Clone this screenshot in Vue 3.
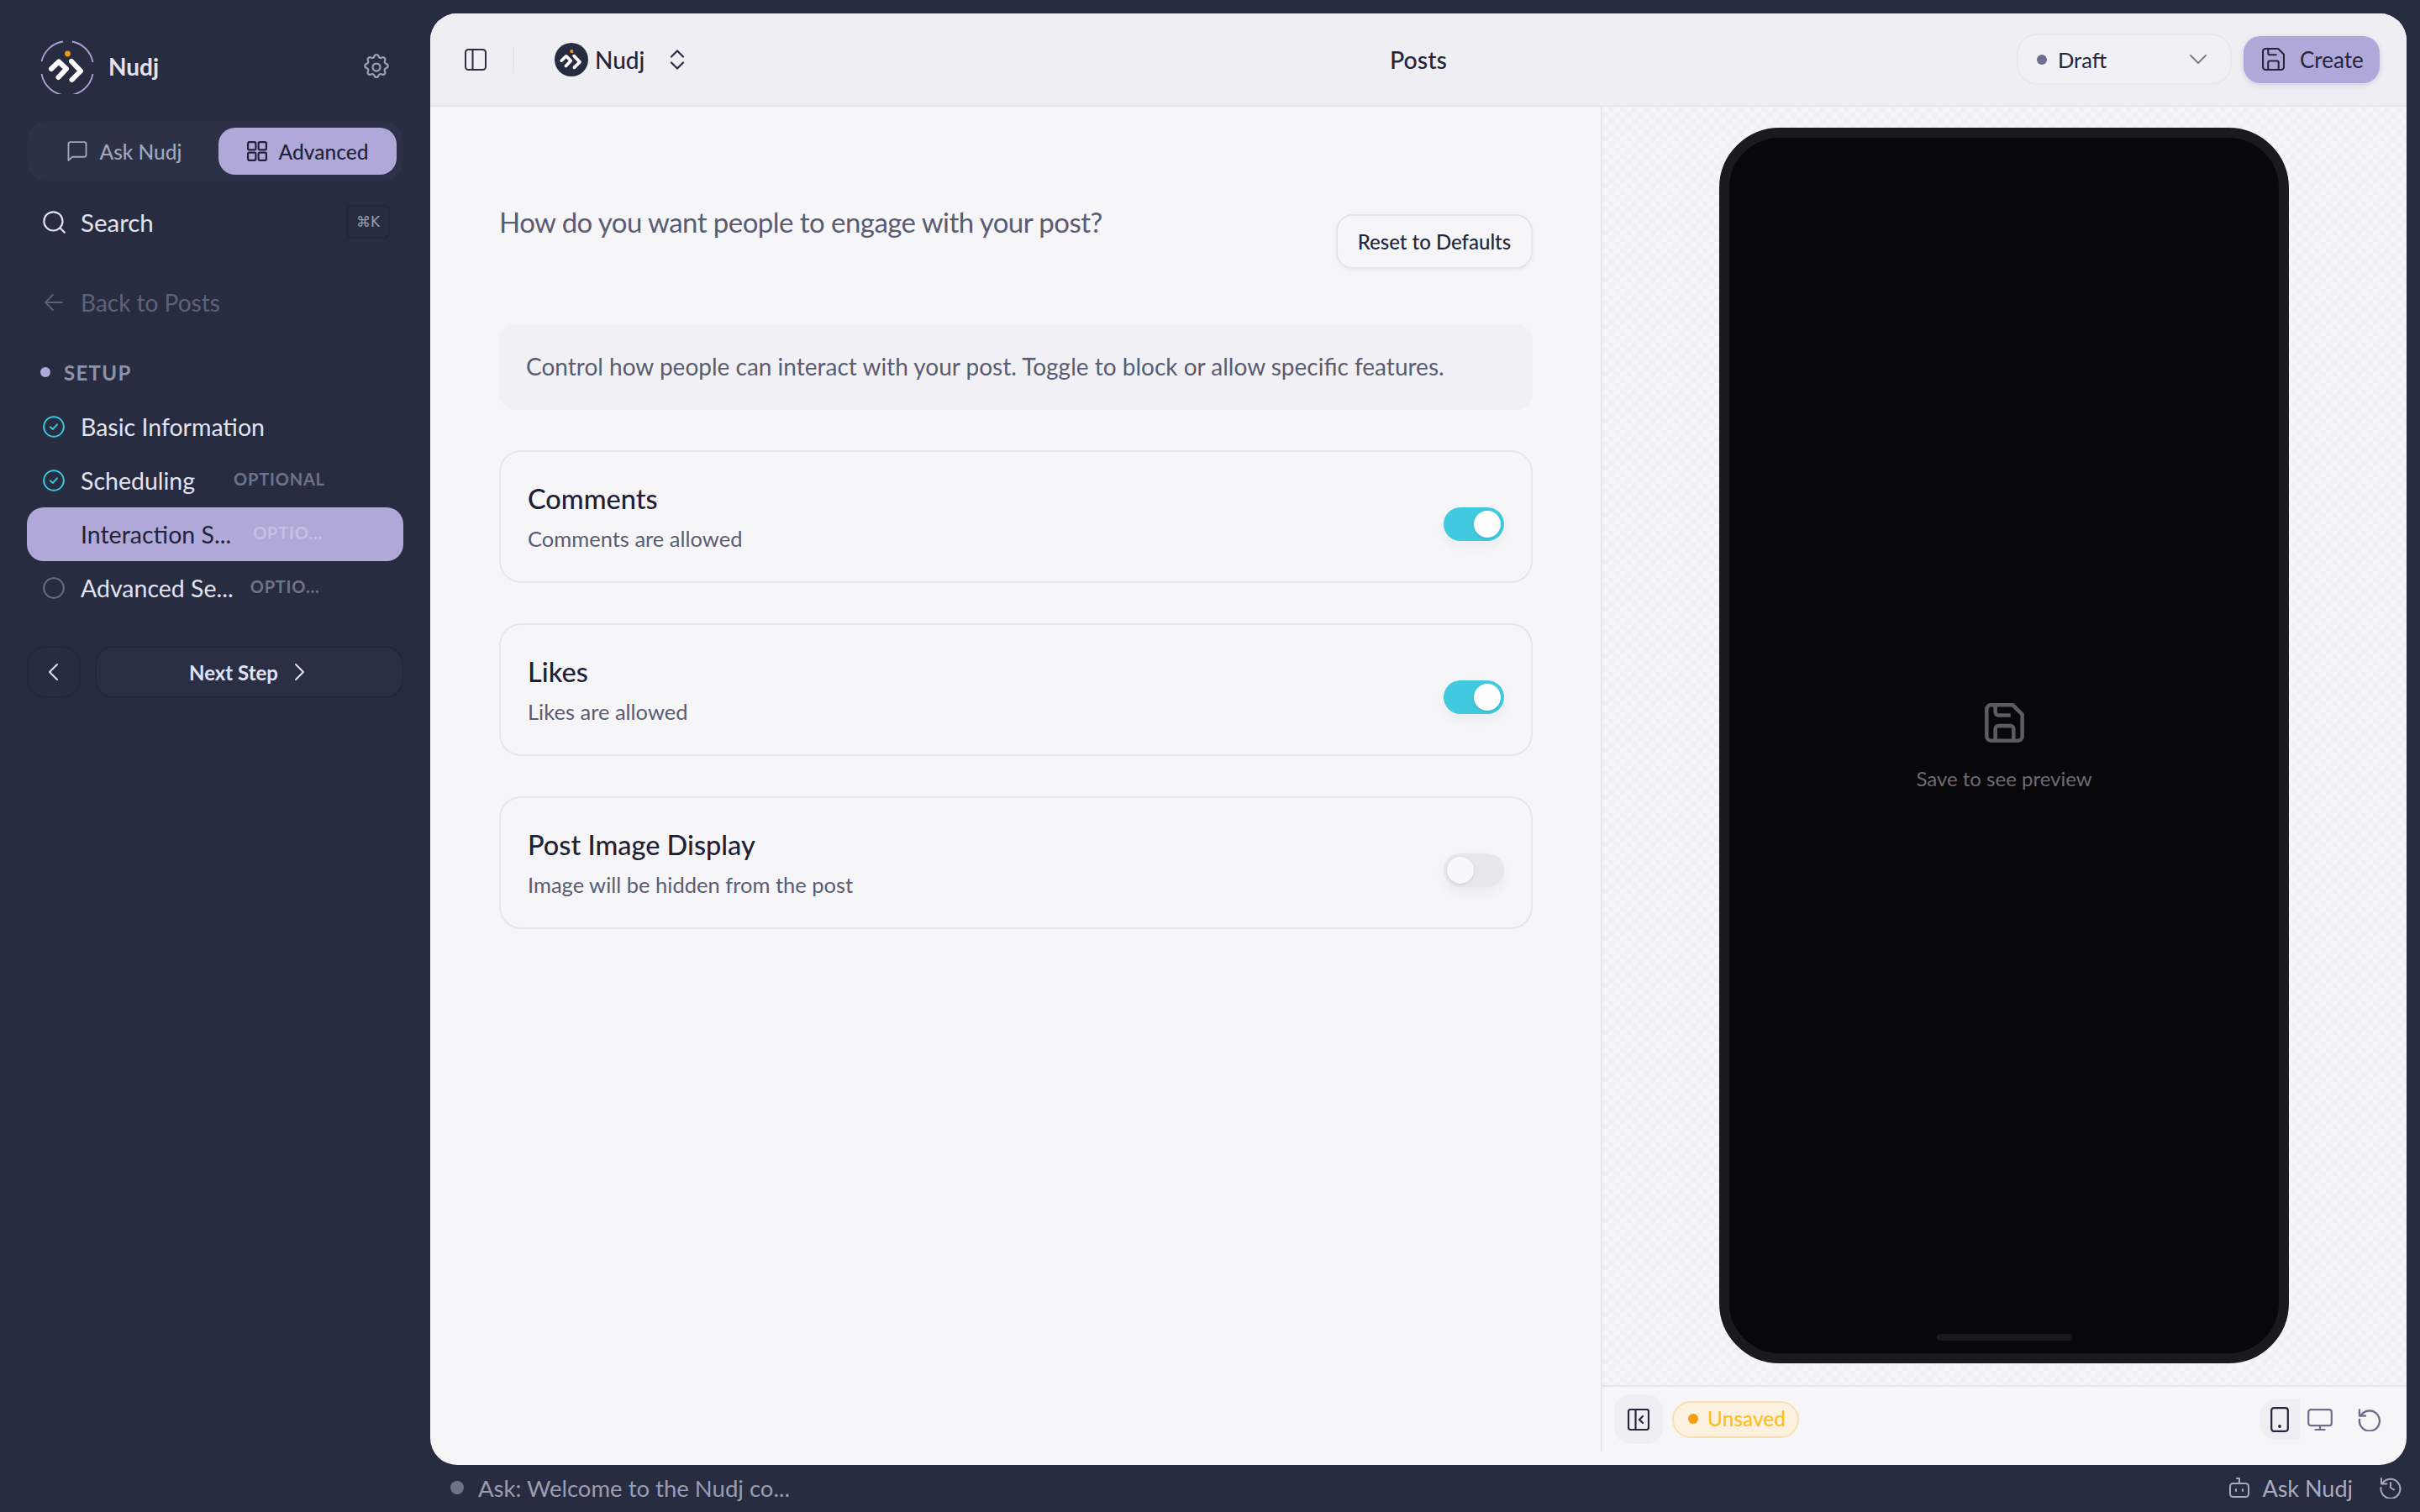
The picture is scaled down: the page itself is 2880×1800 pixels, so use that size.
<template>
  <div class="app">
    <aside class="sidebar">
      <div class="brand">
        <svg class="brand-logo" viewBox="0 0 64 64" fill="none">
          <path d="M1.5 25A31 31 0 0 1 27 1.5M38 1.5A31 31 0 0 1 62.5 26M62.5 40A31 31 0 0 1 1.5 40" stroke="#a9a3d4" stroke-width="1.8" />
          <circle cx="32.5" cy="16" r="3.4" fill="#f09a12" />
          <path d="M13 34l9-8.5 9 8.5-9.5 10M37 25l11 11.5L37.5 47" stroke="#fff" stroke-width="6" stroke-linecap="round" stroke-linejoin="round" />
        </svg>
        <span class="brand-name">Nudj</span>
        <svg class="gear" viewBox="0 0 24 24" fill="none" stroke="currentColor" stroke-width="1.5" stroke-linecap="round" stroke-linejoin="round">
          <path d="M10.3 3.3c.4-1.7 3-1.7 3.4 0a1.7 1.7 0 0 0 2.6 1.1c1.5-.9 3.3.8 2.4 2.4a1.7 1.7 0 0 0 1 2.5c1.8.4 1.8 3 0 3.4a1.7 1.7 0 0 0-1 2.6c.9 1.5-.9 3.3-2.4 2.4a1.7 1.7 0 0 0-2.6 1c-.4 1.8-3 1.8-3.4 0a1.7 1.7 0 0 0-2.6-1c-1.5.9-3.3-.9-2.4-2.4a1.7 1.7 0 0 0-1-2.6c-1.8-.4-1.8-3 0-3.4a1.7 1.7 0 0 0 1-2.5c-.9-1.6.9-3.3 2.4-2.4a1.7 1.7 0 0 0 2.6-1.1z" />
          <circle cx="12" cy="12" r="3" />
        </svg>
      </div>

      <div class="tabs">
        <div class="tab">
          <svg viewBox="2 2 20 20.5" fill="none" stroke="currentColor" stroke-width="1.6" stroke-linejoin="round"><path d="M3 5a2 2 0 0 1 2-2h14a2 2 0 0 1 2 2v11a2 2 0 0 1-2 2H7l-4 3.5z" /></svg>
          Ask Nudj
        </div>
        <div class="tab tab-active">
          <svg viewBox="1 1 22 22" fill="none" stroke="currentColor" stroke-width="2"><rect x="2" y="2" width="8.5" height="8.5" rx="1.5" /><rect x="13.5" y="2" width="8.5" height="8.5" rx="1.5" /><rect x="2" y="13.5" width="8.5" height="8.5" rx="1.5" /><rect x="13.5" y="13.5" width="8.5" height="8.5" rx="1.5" /></svg>
          Advanced
        </div>
      </div>

      <div class="search">
        <svg viewBox="0 0 24 24" fill="none" stroke="currentColor" stroke-width="1.8" stroke-linecap="round"><circle cx="11.5" cy="11.5" r="9.5" /><path d="M18.5 18.5L23 23" /></svg>
        <span>Search</span>
        <kbd class="kbd">⌘K</kbd>
      </div>

      <div class="back">
        <svg viewBox="0 0 24 24" fill="none" stroke="currentColor" stroke-width="1.8" stroke-linecap="round" stroke-linejoin="round"><path d="M22 12H2M11 3l-9 9 9 9" /></svg>
        Back to Posts
      </div>

      <div class="section"><i class="section-dot"></i>SETUP</div>

      <ul class="steps">
        <li v-for="step in steps" :key="step.label" class="step" :class="{ 'step-active': step.active }">
          <svg v-if="step.status === 'done'" class="step-icon" viewBox="0 0 26 26" fill="none" stroke="#3cc5d6" stroke-width="2" stroke-linecap="round" stroke-linejoin="round">
            <circle cx="13" cy="13" r="11.8" /><path d="M9 13.4l2.8 2.6L17 10.4" />
          </svg>
          <svg v-else-if="step.status === 'todo'" class="step-icon" viewBox="0 0 26 26" fill="none" stroke="#6b6f82" stroke-width="2"><circle cx="13" cy="13" r="11.8" /></svg>
          <span v-else class="step-icon"></span>
          <span class="step-label">{{ step.label }}</span>
          <span v-if="step.tag" class="step-tag" :style="{ marginLeft: step.tagGap + 'px' }">{{ step.tag }}</span>
        </li>
      </ul>

      <div class="step-nav">
        <button class="nav-prev">
          <svg viewBox="0 0 24 24" fill="none" stroke="currentColor" stroke-width="2" stroke-linecap="round" stroke-linejoin="round"><path d="M16 3l-9 9 9 9" /></svg>
        </button>
        <button class="nav-next">
          Next Step
          <svg viewBox="0 0 24 24" fill="none" stroke="currentColor" stroke-width="2" stroke-linecap="round" stroke-linejoin="round"><path d="M8 3l9 9-9 9" /></svg>
        </button>
      </div>
    </aside>

    <div class="main">
      <div class="panel">
        <header class="topbar">
          <div class="topbar-left">
            <svg class="topbar-toggle" viewBox="0 0 26 26" fill="none" stroke="#2a2d42" stroke-width="2"><rect x="1" y="1" width="24" height="24" rx="3.5" /><path d="M9.5 1v24" /></svg>
            <i class="topbar-divider"></i>
            <svg class="topbar-logo" viewBox="0 0 64 64" fill="none">
              <circle cx="32" cy="32" r="32" fill="#282c40" />
              <circle cx="32.5" cy="16" r="3.4" fill="#f09a12" />
              <path d="M13 34l9-8.5 9 8.5-9.5 10M37 25l11 11.5L37.5 47" stroke="#fff" stroke-width="6" stroke-linecap="round" stroke-linejoin="round" />
            </svg>
            <span class="topbar-name">Nudj</span>
            <svg class="topbar-updown" viewBox="0 0 18 24" fill="none" stroke="#2a2d42" stroke-width="2.2" stroke-linecap="round" stroke-linejoin="round"><path d="M2 8.5L9 1.5l7 7M2 15.5l7 7 7-7" /></svg>
          </div>
          <div class="topbar-title">Posts</div>
          <div class="topbar-right">
            <div class="status-select">
              <i class="status-dot"></i>
              <span>Draft</span>
              <svg viewBox="0 0 20 12" fill="none" stroke="#77777f" stroke-width="1.8" stroke-linecap="round" stroke-linejoin="round"><path d="M1 1l9 9 9-9" /></svg>
            </div>
            <button class="create-btn">
              <svg viewBox="0 0 26 26" fill="none" stroke="currentColor" stroke-width="2" stroke-linejoin="round"><path d="M4 1h14.5L25 7.5V22a3 3 0 0 1-3 3H4a3 3 0 0 1-3-3V4a3 3 0 0 1 3-3z" /><path d="M7 25v-8a2 2 0 0 1 2-2h8a2 2 0 0 1 2 2v8M7 1v5a2 2 0 0 0 2 2h8" /></svg>
              Create
            </button>
          </div>
        </header>

        <div class="body">
          <section class="form">
            <div class="question-row">
              <h2 class="question">How do you want people to engage with your post?</h2>
              <button class="reset-btn">Reset to Defaults</button>
            </div>
            <p class="info">Control how people can interact with your post. Toggle to block or allow specific features.</p>
            <div v-for="item in settings" :key="item.title" class="card">
              <div>
                <div class="card-title">{{ item.title }}</div>
                <div class="card-sub">{{ item.sub }}</div>
              </div>
              <div class="switch" :class="{ 'switch-on': item.on }"><i class="knob"></i></div>
            </div>
          </section>

          <section class="preview">
            <div class="canvas">
              <div class="phone">
                <svg class="phone-icon" viewBox="0 0 26 26" fill="none" stroke="#5c5c62" stroke-width="2.5" stroke-linejoin="round"><path d="M4 1.3h14.5l6.2 6.2V22a2.7 2.7 0 0 1-2.7 2.7H4A2.7 2.7 0 0 1 1.3 22V4A2.7 2.7 0 0 1 4 1.3z" /><path d="M7 24.7V17a2 2 0 0 1 2-2h8a2 2 0 0 1 2 2v7.7M7 1.3V6a2 2 0 0 0 2 2h8" /></svg>
                <span class="phone-text">Save to see preview</span>
                <i class="home-bar"></i>
              </div>
            </div>
            <div class="preview-bar">
              <button class="collapse-btn">
                <svg viewBox="0 0 26 26" fill="none" stroke="#25283c" stroke-width="2.2" stroke-linecap="round" stroke-linejoin="round"><rect x="1" y="1" width="24" height="24" rx="2.5" /><path d="M9.5 1v24M18 9l-4 4 4 4" /></svg>
              </button>
              <div class="unsaved"><i class="unsaved-dot"></i>Unsaved</div>
              <div class="devices">
                <div class="device device-active">
                  <svg viewBox="0 0 22 30" fill="none" stroke="#25283c" stroke-width="2.2"><rect x="1.2" y="1.2" width="19.6" height="27.6" rx="3" /><circle cx="11" cy="23" r=".8" fill="#25283c" /></svg>
                </div>
                <svg class="device-monitor" viewBox="0 0 30 26" fill="none" stroke="#6e6e88" stroke-width="2.2" stroke-linecap="round" stroke-linejoin="round"><rect x="1.2" y="1.2" width="27.6" height="19" rx="3" /><path d="M15 20v5M9.5 25h11" /></svg>
                <svg class="device-undo" viewBox="0 0 28 28" fill="none" stroke="#6e6e88" stroke-width="2.4" stroke-linecap="round" stroke-linejoin="round"><path d="M3.5 9.5A12 12 0 1 1 2 14M2 2.5v7h7" /></svg>
              </div>
            </div>
          </section>
        </div>
      </div>

      <footer class="statusbar">
        <i class="statusbar-dot"></i>
        <span class="statusbar-text">Ask: Welcome to the Nudj co...</span>
        <div class="statusbar-right">
          <svg viewBox="0 0 26 26" fill="none" stroke="currentColor" stroke-width="2" stroke-linecap="round" stroke-linejoin="round"><rect x="2" y="8" width="22" height="16" rx="3.5" /><path d="M13 8V2h-3M9 15v2M17 15v2" /></svg>
          <span>Ask Nudj</span>
          <svg class="statusbar-history" viewBox="0 0 26 26" fill="none" stroke="currentColor" stroke-width="2" stroke-linecap="round" stroke-linejoin="round"><path d="M3 8.5A11.5 11.5 0 1 1 1.5 13M2 2v6.5h6.5M13 7v6l4 2.5" /></svg>
        </div>
      </footer>
    </div>
  </div>
</template>

<script setup>
const steps = [
  { label: 'Basic Information', status: 'done' },
  { label: 'Scheduling', status: 'done', tag: 'OPTIONAL', tagGap: 46 },
  { label: 'Interaction S...', status: 'current', tag: 'OPTIO...', tagGap: 26, active: true },
  { label: 'Advanced Se...', status: 'todo', tag: 'OPTIO...', tagGap: 20 }
]

const settings = [
  { title: 'Comments', sub: 'Comments are allowed', on: true },
  { title: 'Likes', sub: 'Likes are allowed', on: true },
  { title: 'Post Image Display', sub: 'Image will be hidden from the post', on: false }
]
</script>

<style>
html, body {
  margin: 0;
  background: #282c40;
}
</style>

<style scoped>
.app {
  display: flex;
  width: 2880px;
  height: 1800px;
  overflow: hidden;
  background: #282c40;
  font-family: Lato, "Noto Sans", sans-serif;
}

button {
  font-family: inherit;
  cursor: pointer;
}

/* sidebar */
.sidebar {
  flex: 0 0 512px;
  box-sizing: border-box;
  padding: 48px 32px 0;
  display: flex;
  flex-direction: column;
}

.brand {
  display: flex;
  align-items: center;
  height: 64px;
  padding: 0 14px 0 16px;
}

.brand-logo {
  width: 64px;
  height: 64px;
}

.brand-name {
  margin: -3px 0 0 17px;
  font-size: 28px;
  font-weight: 700;
  color: #e2e3f1;
}

.gear {
  width: 36px;
  height: 36px;
  margin-left: auto;
  color: #9c9fb4;
}

.tabs {
  display: flex;
  height: 72px;
  margin-top: 32px;
  padding: 8px;
  box-sizing: border-box;
  background: #2c3148;
  border-radius: 24px;
}

.tab {
  flex: 1;
  display: flex;
  align-items: center;
  justify-content: center;
  gap: 14px;
  padding-right: 3px;
  font-size: 24.5px;
  font-weight: 500;
  color: #a4a7bb;
  border-radius: 20px;
}

.tab svg {
  width: 24px;
  height: 24px;
}

.tab-active {
  flex: 0 0 212px;
  padding-right: 0;
  background: #b0a8d8;
  color: #20233a;
}

.search {
  display: flex;
  align-items: center;
  height: 40px;
  margin-top: 28px;
  padding: 0 16px 0 18px;
  font-size: 29.5px;
  color: #e2e3f1;
}

.search svg {
  width: 28px;
  height: 28px;
  margin-right: 18px;
}

.kbd {
  display: flex;
  align-items: center;
  justify-content: center;
  width: 52px;
  height: 40px;
  margin-left: auto;
  box-sizing: border-box;
  border: 2px solid #23273a;
  border-radius: 8px;
  font-family: "DejaVu Sans", sans-serif;
  font-size: 17px;
  color: #9a9db0;
}

.back {
  display: flex;
  align-items: center;
  gap: 20px;
  height: 40px;
  margin-top: 56px;
  padding-left: 20px;
  font-size: 28px;
  color: #5d6278;
}

.back svg {
  width: 24px;
  height: 24px;
}

.section {
  display: flex;
  align-items: center;
  height: 30px;
  margin-top: 48px;
  padding-left: 16px;
  font-size: 24px;
  font-weight: 700;
  letter-spacing: 1.3px;
  color: #8e92a8;
}

.section-dot {
  width: 12px;
  height: 12px;
  margin-right: 16px;
  border-radius: 50%;
  background: #b0a8d8;
}

.steps {
  margin: 18px 0 0;
  padding: 0;
  list-style: none;
}

.step {
  display: flex;
  align-items: center;
  height: 64px;
  padding-left: 19px;
  border-radius: 20px;
  font-size: 28.5px;
  color: #e2e3f1;
}

.step-icon {
  flex: 0 0 26px;
  width: 26px;
  height: 26px;
  margin-right: 19px;
}

.step-label {
  margin-top: -1px;
}

.step-tag {
  margin-top: -4px;
  font-size: 20px;
  font-weight: 700;
  letter-spacing: 0.8px;
  color: #6f7388;
}

.step-active {
  background: #b0a8d8;
  color: #20233a;
}

.step-active .step-tag {
  color: #c6c1e4;
}

.step-nav {
  display: flex;
  gap: 17px;
  height: 62px;
  margin-top: 37px;
}

.step-nav button {
  display: flex;
  align-items: center;
  justify-content: center;
  border: 2px solid #24283b;
  border-radius: 22px;
  color: #e2e3f1;
  background: #2a2f46;
}

.step-nav svg {
  width: 24px;
  height: 24px;
}

.nav-prev {
  flex: 0 0 64px;
  padding: 0;
  background: #282c40 !important;
}

.nav-next {
  flex: 1;
  gap: 13px;
  font-size: 24px;
  font-weight: 700;
}

/* main panel */
.main {
  flex: 1;
  display: flex;
  flex-direction: column;
  padding: 16px 16px 0 0;
  min-width: 0;
}

.panel {
  flex: 0 0 1728px;
  display: flex;
  flex-direction: column;
  overflow: hidden;
  border-radius: 32px;
  background: #f6f6f9;
}

.topbar {
  flex: 0 0 111px;
  display: grid;
  grid-template-columns: 1fr auto 1fr;
  align-items: center;
  padding: 0 32px;
  box-sizing: border-box;
  background: #eeeef3;
  border-bottom: 2px solid #e5e5ea;
}

.topbar-left {
  display: flex;
  align-items: center;
  padding-left: 9px;
}

.topbar-toggle {
  width: 26px;
  height: 26px;
}

.topbar-divider {
  width: 2px;
  height: 32px;
  margin: 0 48px 0 31px;
  background: #e4e4ea;
}

.topbar-logo {
  width: 40px;
  height: 40px;
}

.topbar-name {
  margin-left: 8px;
  font-size: 28px;
  font-weight: 500;
  color: #23263a;
}

.topbar-updown {
  width: 18px;
  height: 24px;
  margin-left: 30px;
}

.topbar-title {
  margin-top: 1px;
  font-size: 28.5px;
  font-weight: 500;
  color: #23263a;
}

.topbar-right {
  display: flex;
  align-items: center;
  justify-content: flex-end;
  gap: 14px;
}

.status-select {
  display: flex;
  align-items: center;
  width: 256px;
  height: 61px;
  padding: 0 28px 0 22px;
  box-sizing: border-box;
  background: #f0f0f5;
  border: 2px solid #e7e7ec;
  border-radius: 24px;
  font-size: 25.5px;
  color: #23263a;
}

.status-dot {
  width: 12px;
  height: 12px;
  margin-right: 13px;
  border-radius: 50%;
  background: #6e6e90;
}

.status-select svg {
  width: 20px;
  height: 12px;
  margin-left: auto;
}

.create-btn {
  display: flex;
  align-items: center;
  gap: 18px;
  width: 162px;
  height: 56px;
  padding: 0 0 0 22px;
  border: none;
  border-radius: 20px;
  background: #b0a8d8;
  box-shadow: 0 2px 6px rgba(80, 70, 140, 0.18);
  font-size: 26px;
  color: #23263a;
}

.create-btn svg {
  width: 27px;
  height: 27px;
}

.body {
  flex: 1;
  display: flex;
  min-height: 0;
}

.form {
  flex: 1;
  box-sizing: border-box;
  padding: 112px 81px 0 82px;
}

.question-row {
  display: flex;
  justify-content: space-between;
  align-items: flex-start;
}

.question {
  margin: 0;
  font-size: 33px;
  font-weight: 400;
  letter-spacing: -0.55px;
  line-height: 50px;
  color: #5a5c72;
}

.reset-btn {
  width: 234px;
  height: 65px;
  margin-top: 16px;
  padding: 0;
  background: #f6f6f9;
  border: 2px solid #e4e4ea;
  border-radius: 20px;
  box-shadow: 0 2px 4px rgba(40, 44, 64, 0.05);
  font-size: 24px;
  font-weight: 500;
  color: #23263a;
}

.info {
  height: 102px;
  margin: 66px 0 48px;
  padding: 0 32px 3px;
  box-sizing: border-box;
  display: flex;
  align-items: center;
  background: #f1f1f5;
  border-radius: 20px;
  font-size: 28px;
  color: #5a5c72;
}

.card {
  display: flex;
  align-items: center;
  justify-content: space-between;
  height: 158px;
  margin-bottom: 48px;
  padding: 0 32px;
  box-sizing: border-box;
  border: 2px solid #e6e6ea;
  border-radius: 26px;
}

.card-title {
  font-size: 32.5px;
  font-weight: 500;
  line-height: 44px;
  color: #1e2035;
}

.card-sub {
  margin-top: 7px;
  font-size: 25.5px;
  line-height: 36px;
  color: #5a5c72;
}

.switch {
  position: relative;
  width: 72px;
  height: 40px;
  margin-top: 18px;
  border-radius: 20px;
  background: #e7e7eb;
  box-shadow: 0 6px 14px rgba(40, 44, 64, 0.05);
}

.switch-on {
  background: #40c9df;
}

.knob {
  position: absolute;
  top: 4px;
  left: 4px;
  width: 32px;
  height: 32px;
  border-radius: 50%;
  background: #f8f8fb;
  box-shadow: 0 1px 3px rgba(40, 44, 64, 0.15);
}

.switch-on .knob {
  left: 36px;
  background: #fff;
}

/* preview */
.preview {
  flex: 0 0 959px;
  display: flex;
  flex-direction: column;
  margin-bottom: 16px;
  box-sizing: border-box;
  border-left: 2px solid #e6e6ea;
}

.canvas {
  flex: 1;
  display: flex;
  justify-content: center;
  padding: 25px 1px 0 0;
  box-sizing: border-box;
  background: repeating-conic-gradient(#f1f1f4 0 25%, #f6f6f9 0 50%) 0 0 / 14px 14px;
}

.phone {
  position: relative;
  width: 678px;
  height: 1471px;
  box-sizing: border-box;
  border: 12px solid #1a1a1c;
  border-radius: 72px;
  background: #08080b;
  display: flex;
  flex-direction: column;
  align-items: center;
  justify-content: center;
}

.phone-icon {
  width: 47px;
  height: 47px;
  margin-top: 2px;
}

.phone-text {
  margin-top: 28px;
  font-size: 24px;
  color: #6c6c72;
}

.home-bar {
  position: absolute;
  bottom: 15px;
  left: 247px;
  width: 160px;
  height: 8px;
  border-radius: 4px;
  background: #1a1a1d;
}

.preview-bar {
  flex: 0 0 79px;
  display: flex;
  align-items: center;
  padding: 0 30px 0 14px;
  box-sizing: border-box;
  border-top: 2px solid #e6e6ea;
}

.collapse-btn {
  display: flex;
  align-items: center;
  justify-content: center;
  width: 58px;
  height: 59px;
  padding: 0;
  border: none;
  border-radius: 20px;
  background: #eeeef3;
}

.collapse-btn svg {
  width: 26px;
  height: 26px;
}

.unsaved {
  display: flex;
  align-items: center;
  width: 151px;
  height: 44px;
  margin-left: 11px;
  padding: 0 0 2px 17px;
  box-sizing: border-box;
  background: #fcf1df;
  border: 2px solid #f8e0b0;
  border-radius: 22px;
  font-size: 24.5px;
  font-weight: 500;
  color: #fbbf24;
}

.unsaved-dot {
  width: 12px;
  height: 12px;
  margin-right: 11px;
  border-radius: 50%;
  background: #f59e0b;
}

.devices {
  display: flex;
  align-items: center;
  margin-left: auto;
}

.device {
  display: flex;
  align-items: center;
  justify-content: center;
  width: 48px;
  height: 48px;
  border-radius: 20px 0 0 20px;
  background: #eeeef3;
}

.device svg {
  width: 22px;
  height: 30px;
}

.device-monitor {
  width: 30px;
  height: 26px;
  margin-left: 9px;
}

.device-undo {
  width: 28px;
  height: 28px;
  margin-left: 30px;
}

/* footer */
.statusbar {
  flex: 1;
  display: flex;
  align-items: center;
  padding: 0 6px 2px 24px;
  color: #9a9db0;
}

.statusbar-dot {
  width: 16px;
  height: 16px;
  margin-right: 17px;
  border-radius: 50%;
  background: #6f7388;
}

.statusbar-text {
  font-size: 27.5px;
}

.statusbar-right {
  display: flex;
  align-items: center;
  margin-left: auto;
  font-size: 27px;
  color: #a8abc0;
}

.statusbar-right svg {
  width: 26px;
  height: 26px;
  margin-right: 14px;
}

.statusbar-right svg.statusbar-history {
  margin: 0 0 0 32px;
}
</style>
